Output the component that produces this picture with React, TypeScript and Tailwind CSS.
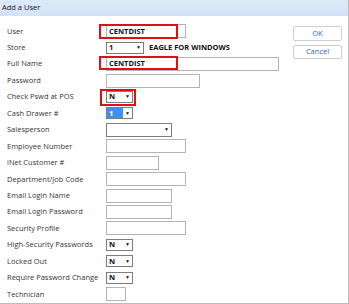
import React from 'react';

type Field =
  | { kind: 'input'; w: number; value?: string }
  | { kind: 'select'; w: number; h?: number; value?: string; highlight?: boolean };

type Row = { label: string; field: Field; mark?: 'user' | 'name' | 'pos' };

const rows: Row[] = [
  { label: 'User', field: { kind: 'input', w: 80, value: 'CENTDIST' }, mark: 'user' },
  { label: 'Store', field: { kind: 'select', w: 38, value: '1' } },
  { label: 'Full Name', field: { kind: 'input', w: 173, value: 'CENTDIST' }, mark: 'name' },
  { label: 'Password', field: { kind: 'input', w: 94 } },
  { label: 'Check Pswd at POS', field: { kind: 'select', w: 27, value: 'N' }, mark: 'pos' },
  { label: 'Cash Drawer #', field: { kind: 'select', w: 27, value: '1', highlight: true } },
  { label: 'Salesperson', field: { kind: 'select', w: 66, h: 14 } },
  { label: 'Employee Number', field: { kind: 'input', w: 80 } },
  { label: 'iNet Customer #', field: { kind: 'input', w: 53 } },
  { label: 'Department/Job Code', field: { kind: 'input', w: 80 } },
  { label: 'Email Login Name', field: { kind: 'input', w: 66 } },
  { label: 'Email Login Password', field: { kind: 'input', w: 66 } },
  { label: 'Security Profile', field: { kind: 'input', w: 80 } },
  { label: 'High-Security Passwords', field: { kind: 'select', w: 27, value: 'N' } },
  { label: 'Locked Out', field: { kind: 'select', w: 27, value: 'N' } },
  { label: 'Require Password Change', field: { kind: 'select', w: 27, value: 'N' } },
  { label: 'Technician', field: { kind: 'input', w: 20 } },
];

function Control({ field }: { field: Field }) {
  if (field.kind === 'input') {
    return (
      <div
        className="flex h-[14px] items-center border border-[#b4b4b4] bg-white pl-[2px] text-[7.5px] font-bold text-[#111]"
        style={{ width: field.w }}
      >
        {field.value}
      </div>
    );
  }
  return (
    <div
      className="flex items-stretch border border-[#7d7d7d] bg-white text-[7.5px] font-bold text-[#111]"
      style={{ width: field.w, height: field.h ?? 12 }}
    >
      <div
        className={
          field.highlight
            ? 'flex flex-1 items-center bg-[#3d90ec] pl-[2px] text-white'
            : 'flex flex-1 items-center pl-[2px]'
        }
      >
        {field.value}
      </div>
      <div className="flex w-[9px] items-center justify-center text-[5px] leading-none">▼</div>
    </div>
  );
}

export default function App() {
  return (
    <div
      className="flex h-[304px] w-[349px] flex-col overflow-hidden border-r border-b border-[#bdbdbd] bg-white text-[#363636]"
      style={{ fontFamily: '"Open Sans", "Noto Sans", sans-serif' }}
    >
      <div className="flex h-[16px] items-center bg-gradient-to-b from-[#dfeaf8] to-[#d2e2f6] pl-[2px] text-[7.5px] text-[#111]">
        Add a User
      </div>
      <div className="flex flex-1">
        <div className="relative flex flex-1 flex-col pt-[7px]">
          {rows.map((row) => (
            <div key={row.label} className="relative flex h-[16.44px] items-center">
              <div className="w-[106px] pl-[7px] text-[7.5px] whitespace-nowrap">{row.label}</div>
              <Control field={row.field} />
              {row.label === 'Store' && (
                <span className="ml-[5px] text-[7.5px] font-bold text-[#111]">EAGLE FOR WINDOWS</span>
              )}
              {row.mark === 'user' && (
                <div className="absolute top-[1px] left-[99px] h-[15px] w-[79px] border-2 border-[#e01010]" />
              )}
              {row.mark === 'name' && (
                <div className="absolute top-[0px] left-[99px] h-[14px] w-[79px] border-2 border-[#e01010]" />
              )}
              {row.mark === 'pos' && (
                <div className="absolute top-[0px] left-[100px] h-[17px] w-[36px] border-2 border-[#e01010]" />
              )}
            </div>
          ))}
        </div>
        <div className="flex w-[55px] flex-col gap-[4px] pt-[10px] pr-[5px]">
          <div className="flex h-[15px] w-[49px] items-center justify-center rounded-[2px] border border-[#cfcfcf] bg-white text-[7.5px] text-[#2f66c2]">
            OK
          </div>
          <div className="flex h-[14px] w-[49px] items-center justify-center rounded-[2px] border border-[#cfcfcf] bg-white text-[7.5px] text-[#2f66c2]">
            Cancel
          </div>
        </div>
      </div>
    </div>
  );
}
